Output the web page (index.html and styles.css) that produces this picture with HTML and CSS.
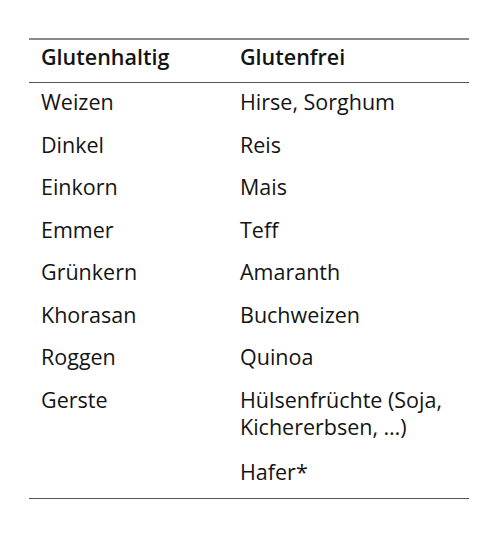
FILE: index.html
```html
<!DOCTYPE html>
<html lang="de">
<head>
<meta charset="utf-8">
<link rel="stylesheet" href="styles.css">
</head>
<body>
<table class="grain-table">
  <thead>
    <tr><th class="col-a">Glutenhaltig</th><th>Glutenfrei</th></tr>
  </thead>
  <tbody>
    <tr><td class="col-a">Weizen</td><td>Hirse, Sorghum</td></tr>
    <tr><td class="col-a">Dinkel</td><td>Reis</td></tr>
    <tr><td class="col-a">Einkorn</td><td>Mais</td></tr>
    <tr><td class="col-a">Emmer</td><td>Teff</td></tr>
    <tr><td class="col-a">Grünkern</td><td>Amaranth</td></tr>
    <tr><td class="col-a">Khorasan</td><td>Buchweizen</td></tr>
    <tr><td class="col-a">Roggen</td><td>Quinoa</td></tr>
    <tr><td class="col-a">Gerste</td><td>Hülsenfrüchte (Soja, Kichererbsen, …)</td></tr>
    <tr class="last-row"><td class="col-a"></td><td>Hafer*</td></tr>
  </tbody>
</table>
</body>
</html>
```

FILE: styles.css
```css
html, body {
  margin: 0;
  padding: 0;
  background: #ffffff;
}
body {
  padding: 38px 28px 0 29px;
  font-family: "Open Sans", "Noto Sans", sans-serif;
  color: #141414;
}
.grain-table {
  width: 440px;
  border-collapse: collapse;
  table-layout: fixed;
  font-size: 21.5px;
  line-height: 27.5px;
}
.grain-table thead tr {
  border-top: 2px solid #8a8a8a;
  border-bottom: 1.5px solid #555555;
}
.grain-table tbody tr:last-child {
  border-bottom: 1.5px solid #555555;
}
.grain-table th {
  text-align: left;
  font-weight: 600;
  padding: 2.5px 12px 12px;
  vertical-align: top;
}
.grain-table td {
  padding: 5px 12px 10px;
  vertical-align: top;
}
.grain-table .last-row td {
  padding-top: 7.5px;
  padding-bottom: 12.5px;
}
.grain-table .col-a {
  width: 175px;
}
```
